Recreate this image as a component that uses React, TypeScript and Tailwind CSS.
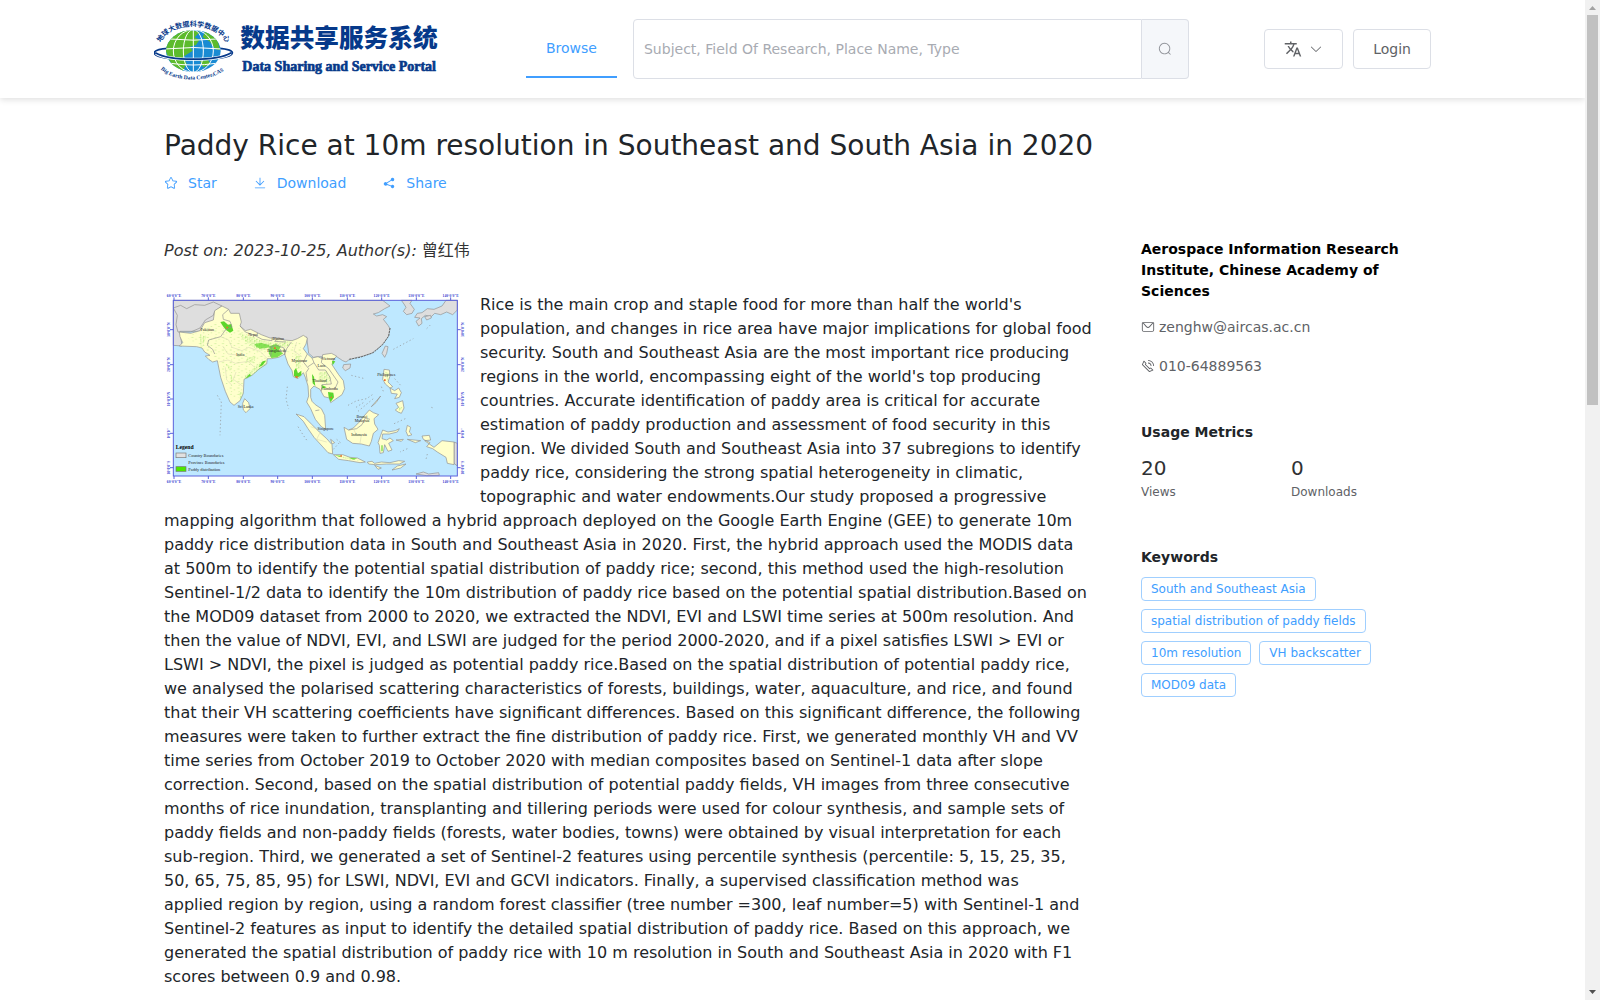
import type { ReactNode } from 'react'
import { MdTranslate } from 'react-icons/md'

const iconPaths = {
  search: 'm795.904 750.72 124.992 124.928a32 32 0 0 1-45.248 45.248L750.656 795.904a416 416 0 1 1 45.248-45.248zM480 832a352 352 0 1 0 0-704 352 352 0 0 0 0 704z',
  arrowDown: 'M831.872 340.864 512 652.672 192.128 340.864a30.592 30.592 0 0 0-42.752 0 29.12 29.12 0 0 0 0 41.6L489.664 714.24a32 32 0 0 0 44.672 0l340.288-331.712a29.12 29.12 0 0 0 0-41.728 30.592 30.592 0 0 0-42.752 0z',
  star: 'm512 747.84 228.16 119.936a6.4 6.4 0 0 0 9.28-6.72l-43.52-254.08 184.512-179.904a6.4 6.4 0 0 0-3.52-10.88l-255.104-37.12L517.76 147.904a6.4 6.4 0 0 0-11.52 0L392.192 379.072l-255.104 37.12a6.4 6.4 0 0 0-3.52 10.88L318.08 606.976l-43.584 254.08a6.4 6.4 0 0 0 9.28 6.72L512 747.84zM313.6 924.48a70.4 70.4 0 0 1-102.144-74.24l37.888-220.928L88.96 472.96A70.4 70.4 0 0 1 128 352.896l221.76-32.256 99.2-200.96a70.4 70.4 0 0 1 126.208 0l99.2 200.96 221.824 32.256a70.4 70.4 0 0 1 39.04 120.064L774.72 629.376l37.888 220.928a70.4 70.4 0 0 1-102.144 74.24L512 820.096l-198.4 104.32z',
  download: 'M160 832h704a32 32 0 1 1 0 64H160a32 32 0 1 1 0-64zm384-253.696 236.288-236.352 45.248 45.248L508.8 704 192 387.2l45.248-45.248L480 584.704V128h64v450.304z',
  share: 'm679.872 348.8-301.76 188.608a127.808 127.808 0 0 1 5.12 52.16l279.936 104.96a128 128 0 1 1-22.464 59.904l-279.872-104.96a128 128 0 1 1-16.64-166.272l301.696-188.608a128 128 0 1 1 33.92 54.272z',
  message: 'M128 224v512a64 64 0 0 0 64 64h640a64 64 0 0 0 64-64V224H128zm0-64h768a64 64 0 0 1 64 64v512a128 128 0 0 1-128 128H192A128 128 0 0 1 64 736V224a64 64 0 0 1 64-64z M904 224 656.512 506.88a192 192 0 0 1-289.024 0L120 224h784zm-698.944 0 210.56 240.704a128 128 0 0 0 192.704 0L818.944 224H205.056z',
  phone: 'M79.36 432.256 591.744 944.64a32 32 0 0 0 35.2 6.784l253.44-108.544a32 32 0 0 0 9.984-52.032l-153.856-153.92a32 32 0 0 0-36.928-6.016l-69.888 34.944L358.08 394.24l35.008-69.888a32 32 0 0 0-5.952-36.928L233.152 133.568a32 32 0 0 0-52.032 10.048L72.512 397.056a32 32 0 0 0 6.784 35.2zm60.48-29.952 81.536-190.08L325.568 316.48l-24.64 49.216-20.608 41.216 32.576 32.64 271.552 271.552 32.64 32.64 41.216-20.672 49.28-24.576 104.192 104.128-190.08 81.472L139.84 402.304zM512 320v-64a256 256 0 0 1 256 256h-64a192 192 0 0 0-192-192zm0-192V64a448 448 0 0 1 448 448h-64a384 384 0 0 0-384-384z',
}

type IconName = keyof typeof iconPaths

const keywords = [
  'South and Southeast Asia',
  'spatial distribution of paddy fields',
  '10m resolution',
  'VH backscatter',
  'MOD09 data',
]

const metrics = [
  { label: 'Views', value: 20 },
  { label: 'Downloads', value: 0 },
]

const actions: { icon: IconName; label: string }[] = [
  { icon: 'star', label: 'Star' },
  { icon: 'download', label: 'Download' },
  { icon: 'share', label: 'Share' },
]

const description =
  "Rice is the main crop and staple food for more than half the world's population, and changes in rice area have major implications for global food security. South and Southeast Asia are the most important rice producing regions in the world, encompassing eight of the world's top producing countries. Accurate identification of paddy area is critical for accurate estimation of paddy production and assessment of food security in this region. We divided South and Southeast Asia into 37 subregions to identify paddy rice, considering the strong spatial heterogeneity in climatic, topographic and water endowments.Our study proposed a progressive mapping algorithm that followed a hybrid approach deployed on the Google Earth Engine (GEE) to generate 10m paddy rice distribution data in South and Southeast Asia in 2020. First, the hybrid approach used the MODIS data at 500m to identify the potential spatial distribution of paddy rice; second, this method used the high-resolution Sentinel-1/2 data to identify the 10m distribution of paddy rice based on the potential spatial distribution.Based on the MOD09 dataset from 2000 to 2020, we extracted the NDVI, EVI and LSWI time series at 500m resolution. And then the value of NDVI, EVI, and LSWI are judged for the period 2000-2020, and if a pixel satisfies LSWI > EVI or LSWI > NDVI, the pixel is judged as potential paddy rice.Based on the spatial distribution of potential paddy rice, we analysed the polarised scattering characteristics of forests, buildings, water, aquaculture, and rice, and found that their VH scattering coefficients have significant differences. Based on this significant difference, the following measures were taken to further extract the fine distribution of paddy rice. First, we generated monthly VH and VV time series from October 2019 to October 2020 with median composites based on Sentinel-1 data after slope correction. Second, based on the spatial distribution of potential paddy fields, VH images from three consecutive months of rice inundation, transplanting and tillering periods were used for colour synthesis, and sample sets of paddy fields and non-paddy fields (forests, water bodies, towns) were obtained by visual interpretation for each sub-region. Third, we generated a set of Sentinel-2 features using percentile synthesis (percentile: 5, 15, 25, 35, 50, 65, 75, 85, 95) for LSWI, NDVI, EVI and GCVI indicators. Finally, a supervised classification method was applied\u00a0region by region, using a random forest classifier (tree number =300, leaf number=5) with Sentinel-1 and Sentinel-2 features as input to identify the detailed spatial distribution of paddy rice. Based on this approach, we generated the spatial distribution of paddy rice with 10 m resolution in South and Southeast Asia in 2020 with F1 scores between 0.9 and 0.98."

function Icon({ name, className = 'size-3.5' }: { name: IconName; className?: string }) {
  return (
    <svg viewBox="0 0 1024 1024" fill="currentColor" aria-hidden="true" className={`shrink-0 ${className}`}>
      <path d={iconPaths[name]} />
    </svg>
  )
}

function Logo() {
  return (
    <svg viewBox="42 45 864 204" className="h-[68px] w-[288px] shrink-0" role="img" aria-label="Data Sharing and Service Portal">
      <defs>
        <clipPath id="globe">
          <ellipse cx="160" cy="153" rx="82" ry="63" />
        </clipPath>
        <path id="arcTop" d="M62 128 C92 62 228 62 262 134" />
        <path id="arcBottom" d="M62 208 C108 250 210 250 266 202" />
      </defs>
      <path d="M84 145 C28 149 30 168 84 175 M236 145 C292 149 290 168 236 175" fill="none" stroke="#06398a" strokeWidth="5" />
      <g clipPath="url(#globe)">
        <rect x="70" y="80" width="180" height="145" fill="#1a8bd3" />
        <path d="M78 90 L150 90 180 96 164 112 178 120 168 135 150 140 158 152 138 165 128 172 140 190 128 214 104 208 88 180 76 150z" fill="#5cbb2c" />
        <path d="M196 92 L232 118 240 150 226 148 208 124 188 112z" fill="#5cbb2c" />
        <path d="M180 184 L204 180 212 192 190 202z" fill="#5cbb2c" />
        <g fill="none" stroke="#fff" strokeWidth="3">
          <path d="M160 88v130M74 147Q160 138 246 147M90 117Q160 124 230 117M92 190Q160 200 228 190" />
          <ellipse cx="160" cy="153" rx="30" ry="64" />
          <ellipse cx="160" cy="153" rx="60" ry="64" />
        </g>
      </g>
      <path d="M48 160 C90 184 230 184 272 160" fill="none" stroke="#fff" strokeWidth="9" />
      <path d="M46 158 C90 184 230 184 274 158" fill="none" stroke="#06398a" strokeWidth="5" />
      <g fill="#06398a">
        <text className="font-['Noto_Sans_CJK_SC',sans-serif] text-[21px] font-bold">
          <textPath href="#arcTop">地球大数据科学数据中心</textPath>
        </text>
        <text className="font-['Liberation_Serif',serif] text-[17px] font-bold">
          <textPath href="#arcBottom">Big Earth Data Center,CAS</textPath>
        </text>
        <text x="301" y="141" className="font-['Noto_Sans_CJK_SC',sans-serif] text-[74px] font-black">
          数据共享服务系统
        </text>
        <text x="307" y="212" stroke="#06398a" strokeWidth="2" className="font-['Liberation_Serif',serif] text-[42px] font-bold">
          Data Sharing and Service Portal
        </text>
      </g>
    </svg>
  )
}

const lonTicks = [42, 145, 250, 353, 457, 562, 665, 769, 872]
const lonLabels = ['60°0\'0"E', '70°0\'0"E', '80°0\'0"E', '90°0\'0"E', '100°0\'0"E', '110°0\'0"E', '120°0\'0"E', '130°0\'0"E', '140°0\'0"E']
const latTicks = [133, 238, 341, 444, 547]
const latLabels = ['30°0\'0"N', '20°0\'0"N', '10°0\'0"N', '0°0\'0"', '10°0\'0"S']

const places: [string, number, number][] = [
  ['Pakistan', 142, 137],
  ['Nepal', 279, 152],
  ['Bhutan', 355, 164],
  ['India', 241, 211],
  ['Bangladesh', 350, 201],
  ['Myanmar', 418, 229],
  ['Vietnam', 505, 223],
  ['Laos', 484, 245],
  ['Thailand', 479, 291],
  ['Cambodia', 509, 313],
  ['Sri Lanka', 257, 369],
  ['Philippines', 679, 272],
  ['Singapore', 497, 434],
  ['Brunei', 606, 398],
  ['Malaysia', 606, 411],
  ['Indonesia', 597, 451],
]

function DistributionMap() {
  return (
    <svg viewBox="12 23 906 582" className="float-left mr-3.5 h-[194px] w-[302px]" role="img" aria-label="Paddy rice distribution">
      <defs>
        <pattern id="speckle" width="14" height="12" patternUnits="userSpaceOnUse">
          <path d="M1 2h5v2h-5zM9 5h3v3h-3zM3 9h4v2h-4zM10 0h2v2h-2z" fill="#7fdc4c" />
        </pattern>
        <pattern id="sparse" width="23" height="19" patternUnits="userSpaceOnUse">
          <path d="M2 3h6v2h-6zM14 9h4v2h-4zM6 14h3v2h-3z" fill="#c3ec92" />
        </pattern>
      </defs>
      <rect x="40" y="45" width="852" height="527" fill="#bee8ff" />
      {/* countries outside the study area */}
      <g fill="#dedede" stroke="#909090" strokeWidth="2" strokeLinejoin="round">
        <path d="M40 45H668L690 62 674 70 655 82 640 86 650 92 668 88 680 94 670 102 684 120 690 130 686 152 672 172 656 188 634 204 610 212 588 217 566 224 558 230 548 226 530 214 480 214 460 216 446 204 440 155 410 164 380 178 340 170 262 150 210 110 150 138 60 138 66 182 40 180z" />
        <path d="M40 68L62 60 80 70 104 58 134 60 160 50 186 62 164 78 160 90 136 104 120 128 92 140 54 140 48 118 52 90z" fill="none" />
        <path d="M724 45L732 56 738 66 730 78 740 88 756 84 763 72 750 54 756 45z" />
        <path d="M892 45H858L846 62 822 72 802 70 786 82 772 84 764 96 780 98 768 108 776 122 786 114 784 100 796 90 814 94 824 84 842 88 860 80 878 88 892 74z" />
        <path d="M794 94L812 90 814 98 800 104z" />
        <path d="M676 182L684 184 680 204 674 216 666 204z" />
        <path d="M551 238L572 236 570 248 556 256 548 248z" />
        <path d="M882 470L892 474V542L882 534z" />
        <path d="M768 566L790 560 806 566 836 562 838 570 800 571z" />
      </g>
      <g fill="#ffffcc" stroke="#909090" strokeWidth="2" strokeLinejoin="round">
        {/* Pakistan, India and Indochina */}
        <path d="M58 182L68 172 60 154 58 140 92 144 120 136 134 112 160 104 164 76 186 62 206 72 212 84 238 84 244 110 240 122 256 136 272 132 304 148 330 158 356 158 372 164 396 166 412 160 430 150 442 158 438 176 430 190 442 206 456 218 474 214 486 220 488 208 514 204 530 212 520 224 516 238 536 268 550 286 554 310 546 328 526 342 512 352 508 338 492 334 480 312 462 302 452 312 452 336 456 348 466 358 484 370 494 390 497 432 484 424 466 402 452 370 440 350 446 332 444 302 436 276 430 262 414 280 400 274 396 256 384 236 374 206 356 216 334 220 322 220 320 236 298 250 276 270 252 282 250 324 240 346 222 360 210 350 196 318 182 276 172 226 158 230 146 222 136 212 150 210 134 200 126 188 110 184z" />
        <path d="M254 340L266 352 270 370 258 382 250 374 248 354z" />
        {/* Sumatra and Java */}
        <path d="M408 386L432 394 456 418 478 440 500 460 516 478 518 506 504 502 486 482 462 456 444 430 430 408z" />
        <path d="M520 508L548 508 570 516 592 518 616 530 600 532 566 526 536 522z" />
        {/* Borneo */}
        <path d="M552 426L566 434 580 428 598 410 612 392 628 374 640 382 656 388 642 400 644 416 654 432 640 444 634 468 628 482 604 476 578 474 560 462z" />
        {/* Sulawesi */}
        <path d="M668 434L684 440 706 436 718 430 712 440 688 446 668 446 666 460 680 464 690 458 700 466 686 474 696 494 684 498 674 478 670 502 660 504 658 480 654 472 662 450z" />
        {/* Philippines */}
        <path d="M672 252L688 254 690 272 684 290 698 304 690 308 676 296 668 282z" />
        <path d="M690 308L704 316 716 308 724 322 718 336 704 340 712 326 694 324z" />
        <path d="M708 354L728 346 732 368 724 384 714 380 706 374 716 366z" />
        <path d="M662 332L634 364 648 352z" />
        {/* New Guinea */}
        <path d="M786 452L808 450 812 464 794 466 822 486 846 466 882 470V538L862 534 858 516 832 500 818 490 800 484 810 472 790 462z" />
        <path d="M622 530L636 528 644 534 664 530 690 532 716 526 734 528 718 536 680 536 646 538 626 536z" />
        <path d="M696 554L712 542 738 536 722 548z M742 420L752 426 748 440 756 448 744 452 738 438z M708 464L730 462 724 468z M742 462L782 466 766 472z M512 462L524 472 516 476z M644 540L664 548 654 552z" />
      </g>
      {/* paddy fields, densest areas solid */}
      <path d="M70 150L120 140 160 110 236 128 300 160 420 166 430 250 384 200 330 214 252 276 246 324 226 350 200 310 180 230 140 200z" fill="url(#sparse)" />
      <g fill="url(#speckle)">
        <path d="M236 142L290 160 340 172 392 168 384 182 330 196 286 190 250 164z" />
        <path d="M120 150L140 152 134 166 126 188 138 192 122 186z" />
        <path d="M262 216L288 214 280 232 258 230z" />
        <path d="M298 232L322 222 316 240 262 280 252 276z" />
        <path d="M476 262L500 256 514 280 502 296 476 288z" />
        <path d="M404 204L420 214 424 250 408 250z M196 236L216 244 210 258z M210 264L222 288 212 290z M236 320L250 322 240 346z" />
        <path d="M676 258L686 264 682 290z M712 364L728 366 718 380z M524 510L560 516 606 526 560 522z" />
      </g>
      <g fill="#5cd62c">
        <path d="M181 110L192 108 204 118 214 116 220 136 210 142 198 134 190 124z" />
        <path d="M284 176L302 172 326 178 332 186 300 190 288 184z" opacity=".7" />
        <path d="M330 182L348 176 362 184 356 196 370 204 352 216 334 218 326 204z" opacity=".8" />
        <path d="M308 228L318 226 308 240 296 246z M268 266L274 270 256 280z" />
        <path d="M402 256L408 248 414 264 424 256 424 270 410 278 402 272z" />
        <path d="M516 226L526 228 518 240z M504 320L520 322 522 336 512 350 506 336z M456 266L462 274 466 302 458 294z M484 298L500 306 488 310z" />
        <path d="M524 510L546 511 540 515z M566 517L592 519 580 523z M664 480h4v18h-4z" opacity=".8" />
      </g>
      <g fill="none" stroke="#909090" strokeWidth="2">
        <path d="M206 72L188 88 190 102 210 108 216 124 196 134 182 154 146 164 142 180 158 192 164 206" />
        <path d="M240 122L256 140 284 150 306 162 336 166 336 156 M356 158L344 168 378 170 M336 182L332 214 M328 186L350 180 372 188 374 208 M374 208L380 190 394 170 M442 206L430 230 446 250 438 262 442 288 M456 218L462 232 444 244 M462 232L476 254 496 254 510 276 514 296 486 298 484 318 M486 220L484 232 506 250 534 290 524 312 M466 376L478 374 M566 434L590 430 606 418 616 398 630 402" />
      </g>
      {/* province boundaries */}
      <g fill="none" stroke="#d3d3b4" strokeWidth="1.5">
        <path d="M182 154L206 164 216 186 246 196 266 186 300 198 322 220 M176 230L204 224 226 234 264 228 284 246 M196 246L200 284 216 300 M228 260L220 282 250 304 M188 182L204 206 242 210 M410 170L402 198 426 214 M452 424L480 434 M482 438L470 462 500 470 M580 430L590 450 620 446 M604 450L600 474" />
      </g>
      {/* small islands */}
      <g fill="none" stroke="#909090" strokeWidth="2" strokeDasharray="4 7">
        <path d="M382 304L378 342 386 370 M172 330L184 350 180 450 M414 424L430 450 444 470 M564 360L590 346 620 340 640 326 M588 366L610 352 M574 270L614 280 M594 378L640 340 M700 192L760 160 M736 400L700 416 M742 490L720 500 M802 506L798 522 M520 492L540 470 M704 280L722 300 M664 304L670 318 M800 130L812 118 M530 462L544 474 M814 366L820 368" />
      </g>
      <path d="M690 128L686 152 668 178 640 202 600 216 566 222" fill="none" stroke="#666" strokeWidth="3" strokeDasharray="6 3" />
      <g fill="#ef6a30">
        <path d="M199 124h5v5h-5zM342 186h5v5h-5zM407 272h6v5h-6zM672 282h5v5h-5zM541 510h5v4h-5zM512 334h4v4h-4z" />
      </g>
      <g className="font-['Liberation_Serif',serif] text-[12px]" fill="#222" textAnchor="middle">
        {places.map(([name, x, y]) => (
          <text key={name} x={x} y={y}>{name}</text>
        ))}
      </g>
      <g className="font-['Liberation_Serif',serif]">
        <text x="47" y="490" className="text-[17px] font-bold">Legend</text>
        <g stroke="#777" strokeWidth="2">
          <rect x="48" y="503" width="30" height="14" fill="#e1e1e1" />
          <rect x="48" y="544" width="30" height="14" fill="#4ce600" />
        </g>
        <g className="text-[13px]" fill="#222">
          <text x="85" y="514">Country Boundaries</text>
          <text x="85" y="535">Province Boundaries</text>
          <text x="85" y="556">Paddy distribution</text>
        </g>
      </g>
      <g stroke="#5a62dc" strokeWidth="3" fill="none">
        <rect x="40" y="45" width="852" height="527" />
        {lonTicks.map(x => <path key={x} d={`M${x} 36v9M${x} 572v9`} />)}
        {latTicks.map(y => <path key={y} d={`M30 ${y}h10M892 ${y}h10`} />)}
      </g>
      <g className="font-['Liberation_Serif',serif] text-[11px] font-bold" fill="#3640d0" textAnchor="middle">
        {lonTicks.map((x, i) => (
          <g key={x}>
            <text x={x} y="34">{lonLabels[i]}</text>
            <text x={x} y="593">{lonLabels[i]}</text>
          </g>
        ))}
        {latTicks.map((y, i) => (
          <g key={y}>
            <text transform={`translate(29 ${y}) rotate(-90)`}>{latLabels[i]}</text>
            <text transform={`translate(912 ${y}) rotate(-90)`}>{latLabels[i]}</text>
          </g>
        ))}
      </g>
    </svg>
  )
}

function Header() {
  return (
    <header className="shadow-[0_2px_6px_rgba(0,0,0,0.12)]">
      <div className="mx-auto flex h-[98px] w-full max-w-[1277px] items-center">
        <Logo />
        <nav className="ml-21 h-[58px]">
          <a href="#browse" className="flex h-full items-center border-b-2 border-[#409eff] px-5 text-sm text-[#409eff]">
            Browse
          </a>
        </nav>
        <form className="ml-4 flex h-[60px] flex-1" onSubmit={e => e.preventDefault()}>
          <input
            type="text"
            aria-label="Search"
            placeholder="Subject, Field Of Research, Place Name, Type"
            className="min-w-0 flex-1 rounded-l border border-[#dcdfe6] px-2.5 text-sm text-[#606266] outline-none placeholder:text-[#a8abb2]"
          />
          <button
            type="submit"
            aria-label="Submit search"
            className="flex w-[47px] items-center justify-center rounded-r border border-l-0 border-[#dcdfe6] bg-[#f5f7fa] text-[#909399]"
          >
            <Icon name="search" />
          </button>
        </form>
        <div className="ml-[75px] flex gap-2.5 text-sm text-[#606266]">
          <button type="button" aria-label="Language" className="flex h-10 items-center gap-[7px] rounded border border-[#dcdfe6] px-[19px]">
            <MdTranslate size={18} />
            <Icon name="arrowDown" />
          </button>
          <button type="button" className="h-10 rounded border border-[#dcdfe6] px-[19px]">Login</button>
        </div>
      </div>
    </header>
  )
}

function ContactLine({ icon, children }: { icon: IconName; children: ReactNode }) {
  return (
    <p className="flex h-[39px] items-center gap-1 text-sm text-[#606266]">
      <Icon name={icon} />
      {children}
    </p>
  )
}

function Sidebar() {
  return (
    <aside className="w-[300px] shrink-0">
      <h2 className="text-sm leading-[21px] font-bold text-black">
        Aerospace Information Research Institute, Chinese Academy of Sciences
      </h2>
      <div className="mt-[5px]">
        <ContactLine icon="message">zenghw@aircas.ac.cn</ContactLine>
        <ContactLine icon="phone">010-64889563</ContactLine>
      </div>

      <h3 className="mt-[37px] text-sm leading-[21px] font-bold">Usage Metrics</h3>
      <dl className="mt-[11px] grid grid-cols-2">
        {metrics.map(m => (
          <div key={m.label} className="flex flex-col-reverse">
            <dt className="text-xs leading-5 text-[#606266]">{m.label}</dt>
            <dd className="text-xl leading-7 text-[#303133]">{m.value}</dd>
          </div>
        ))}
      </dl>

      <h3 className="mt-[45px] text-sm leading-[21px] font-bold">Keywords</h3>
      <div className="mt-[9px] flex flex-wrap gap-2">
        {keywords.map(k => (
          <span key={k} className="flex h-6 items-center rounded border border-[#a0cfff] px-[9px] text-xs text-[#409eff]">
            {k}
          </span>
        ))}
      </div>
    </aside>
  )
}

function Scrollbar() {
  return (
    <div aria-hidden="true" className="flex w-[15px] shrink-0 flex-col items-center bg-[#f1f1f1]">
      <svg viewBox="0 0 15 15" className="size-[15px] shrink-0" fill="#a3a3a3">
        <path d="M4 10h7L7.500 6z" />
      </svg>
      <div className="h-[390px] w-[11px] bg-[#c1c1c1]" />
      <svg viewBox="0 0 15 15" className="mt-auto size-[15px] shrink-0" fill="#505050">
        <path d="M4 5h7L7.500 9z" />
      </svg>
    </div>
  )
}

export default function App() {
  return (
    <div className="flex h-screen bg-white font-['DejaVu_Sans','Noto_Sans_CJK_SC',sans-serif] text-[#212529]">
      <div className="min-w-0 flex-1 overflow-hidden">
        <Header />
        <main className="mx-auto w-full max-w-[1297px] pt-[29px] pl-5">
          <h1 className="text-[28px] leading-[38px]">Paddy Rice at 10m resolution in Southeast and South Asia in 2020</h1>
          <div className="mt-[7px] flex gap-9">
            {actions.map(a => (
              <button key={a.label} type="button" className="flex items-center gap-2.5 text-sm leading-[22px] text-[#409eff]">
                <Icon name={a.icon} />
                {a.label}
              </button>
            ))}
          </div>

          <div className="mt-[45px] flex justify-between gap-12">
            <article className="min-w-0 flex-1">
              <p className="leading-6 text-[#333]">
                <em>Post on: 2023-10-25, Author(s): </em>
                曾红伟
              </p>
              <div className="mt-[30px] leading-6">
                <DistributionMap />
                {description}
              </div>
            </article>
            <Sidebar />
          </div>
        </main>
      </div>
      <Scrollbar />
    </div>
  )
}
